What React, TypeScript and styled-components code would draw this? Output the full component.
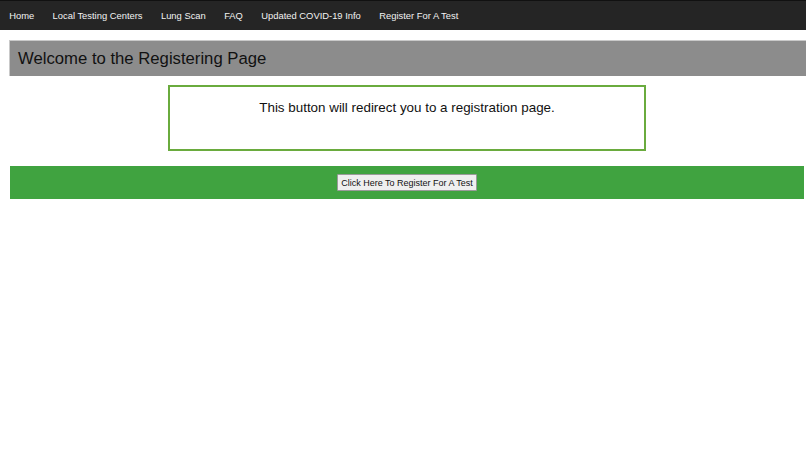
import React from 'react';
import styled, { createGlobalStyle } from 'styled-components';

const GlobalStyle = createGlobalStyle`
  html, body {
    margin: 0;
    padding: 0;
    background: #ffffff;
    font-family: "Liberation Sans", Arial, sans-serif;
  }
`;

const Nav = styled.nav`
  display: flex;
  align-items: center;
  height: 30px;
  padding-top: 1px;
  background-color: #252525;
  border-top: 1px solid #111;
  box-sizing: border-box;
`;
const NavLink = styled.a`
  color: #f2f2f2;
  font-size: 9.4px;
  padding: 0 9.2px;
  text-decoration: none;
  line-height: 14px;
  white-space: nowrap;
`;
const Header = styled.h2`
  margin: 10px 0 0 9px;
  height: 36px;
  display: flex;
  align-items: center;
  padding-left: 8px;
  box-sizing: border-box;
  background-color: #8c8c8c;
  border-top: 1px solid #c9c9c9;
  border-left: 1px solid #c9c9c9;
  font-size: 16.7px;
  font-weight: 400;
  color: #111;
`;
const Content = styled.div`
  margin: 0 2px 0 10px;
`;
const InfoBox = styled.div`
  width: 478px;
  height: 66px;
  margin: 9px auto 0;
  box-sizing: border-box;
  border: 2px solid #6aab3e;
  padding-top: 13px;
  text-align: center;
  font-size: 13.4px;
  color: #111;
`;
const ButtonBar = styled.div`
  margin-top: 15px;
  height: 33px;
  display: flex;
  align-items: center;
  justify-content: center;
  background-color: #40a340;
`;
const RegisterButton = styled.button`
  box-sizing: border-box;
  height: 17px;
  padding: 0 3.5px;
  font-family: "Liberation Sans", Arial, sans-serif;
  font-size: 9px;
  color: #111;
  background-color: #efefef;
  border: 1px solid #9a9a9a;
  border-radius: 1px;
  cursor: pointer;
`;

const links = [
  'Home',
  'Local Testing Centers',
  'Lung Scan',
  'FAQ',
  'Updated COVID-19 Info',
  'Register For A Test',
];

const App: React.FC = () => {
  return (
    <>
      <GlobalStyle />
      <Nav>
        {links.map((label) => (
          <NavLink key={label} href="#">
            {label}
          </NavLink>
        ))}
      </Nav>
      <Header>Welcome to the Registering Page</Header>
      <Content>
        <InfoBox>This button will redirect you to a registration page.</InfoBox>
        <ButtonBar>
          <RegisterButton>Click Here To Register For A Test</RegisterButton>
        </ButtonBar>
      </Content>
    </>
  );
};

export default App;
